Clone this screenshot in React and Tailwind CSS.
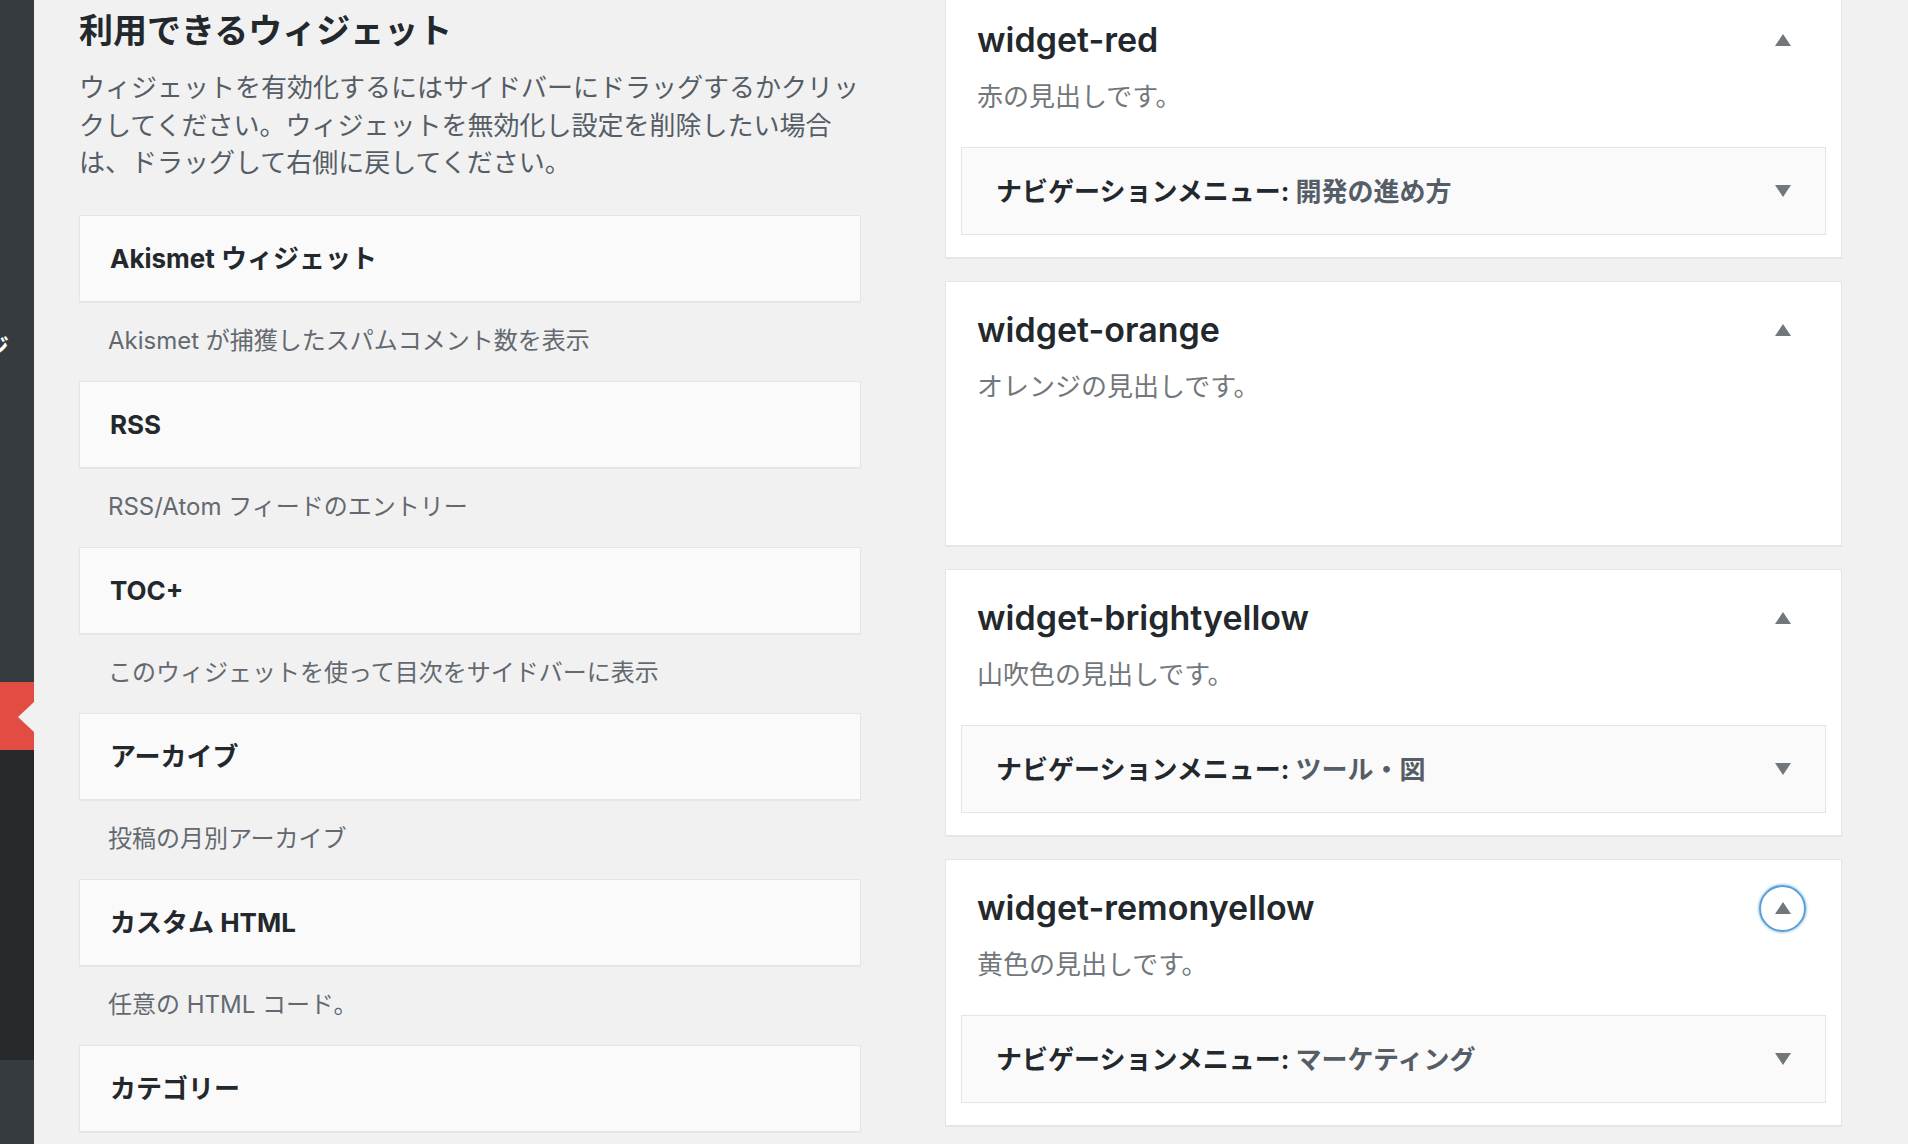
const FONT = "font-['Inter','Noto_Sans_CJK_JP',sans-serif]";

const available = [
  { title: 'Akismet ウィジェット', desc: 'Akismet が捕獲したスパムコメント数を表示' },
  { title: 'RSS', desc: 'RSS/Atom フィードのエントリー' },
  { title: 'TOC+', desc: 'このウィジェットを使って目次をサイドバーに表示' },
  { title: 'アーカイブ', desc: '投稿の月別アーカイブ' },
  { title: 'カスタム HTML', desc: '任意の HTML コード。' },
  { title: 'カテゴリー', desc: '' },
];

const areas = [
  { name: 'widget-red', desc: '赤の見出しです。', nav: '開発の進め方', h: 'h-[267px]' },
  { name: 'widget-orange', desc: 'オレンジの見出しです。', nav: null, h: 'h-[265px]' },
  { name: 'widget-brightyellow', desc: '山吹色の見出しです。', nav: 'ツール・図', h: 'h-[267px]' },
  { name: 'widget-remonyellow', desc: '黄色の見出しです。', nav: 'マーケティング', h: 'h-[267px]', focused: true },
];

function Arrow({ up }) {
  return (
    <svg width="16" height="12" viewBox="0 0 16 12" className="block">
      <polygon points={up ? '8,0 16,12 0,12' : '0,0 16,0 8,12'} fill="#72777c" />
    </svg>
  );
}

function Sidebar() {
  return (
    <div className="w-[34px] shrink-0 flex flex-col h-full overflow-hidden">
      <div className="relative h-[682px] bg-[#363b3f]">
        <span className="absolute left-[-15px] top-[336px] text-[24px] font-bold text-white leading-none">ジ</span>
      </div>
      <div className="relative h-[68px] bg-[#e14d43]">
        <div className="absolute right-0 top-[20px] w-0 h-0 border-y-[15px] border-y-transparent border-r-[16px] border-r-[#f1f1f1]" />
      </div>
      <div className="h-[310px] bg-[#26292c]" />
      <div className="flex-1 bg-[#363b3f]" />
    </div>
  );
}

function AvailableWidgets() {
  return (
    <div className="w-[782px] shrink-0 ml-[45px] pt-[11px]">
      <h2 className="text-[34px] leading-[40px] font-bold text-[#23282d]">利用できるウィジェット</h2>
      <p className="mt-[18px] text-[26px] leading-[37.5px] text-[#555d66]">
        ウィジェットを有効化するにはサイドバーにドラッグするかクリッ
        <br />
        クしてください。ウィジェットを無効化し設定を削除したい場合
        <br />
        は、ドラッグして右側に戻してください。
      </p>
      <div className="mt-[33px]">
        {available.map((w) => (
          <div key={w.title}>
            <div className="h-[87px] border border-[#e5e5e5] bg-[#fafafa] shadow-[0_1px_1px_rgba(0,0,0,0.04)] flex items-center pl-[30px]">
              <span className="text-[26px] font-bold text-[#23282d]">{w.title}</span>
            </div>
            {w.desc && (
              <div className="h-[79px] flex items-center pl-[29px] text-[24px] text-[#646970]">
                {w.desc}
              </div>
            )}
          </div>
        ))}
      </div>
    </div>
  );
}

function AreaCard({ area }) {
  return (
    <div className={`${area.h} border border-[#e5e5e5] bg-white shadow-[0_1px_1px_rgba(0,0,0,0.04)]`}>
      <div className="mt-[24px] h-[48px] flex items-center justify-between pl-[31px] pr-[35px]">
        <h3 className="text-[34px] font-semibold text-[#23282d] leading-none">{area.name}</h3>
        <button
          type="button"
          className={`w-[47px] h-[47px] rounded-full flex items-center justify-center ${
            area.focused ? 'border-2 border-[#5b9dd9] shadow-[0_0_3px_rgba(30,140,190,0.8)]' : ''
          }`}
        >
          <Arrow up />
        </button>
      </div>
      <p className="mt-[15px] pl-[31px] text-[26px] leading-[36px] text-[#72777c]">{area.desc}</p>
      {area.nav && (
        <div className="mt-[32px] mx-[15px] h-[88px] border border-[#e5e5e5] bg-[#fafafa] flex items-center justify-between pl-[34px] pr-[34px]">
          <span className="text-[26px] font-bold text-[#23282d]">
            ナビゲーションメニュー:<span className="text-[#555d66]"> {area.nav}</span>
          </span>
          <Arrow />
        </div>
      )}
    </div>
  );
}

export default function App() {
  return (
    <div className={`${FONT} flex w-full h-[1144px] overflow-hidden bg-[#f1f1f1]`}>
      <Sidebar />
      <AvailableWidgets />
      <div className="w-[897px] shrink-0 ml-[84px] mt-[-9px] flex flex-col gap-[23px]">
        {areas.map((a) => (
          <AreaCard key={a.name} area={a} />
        ))}
      </div>
    </div>
  );
}
